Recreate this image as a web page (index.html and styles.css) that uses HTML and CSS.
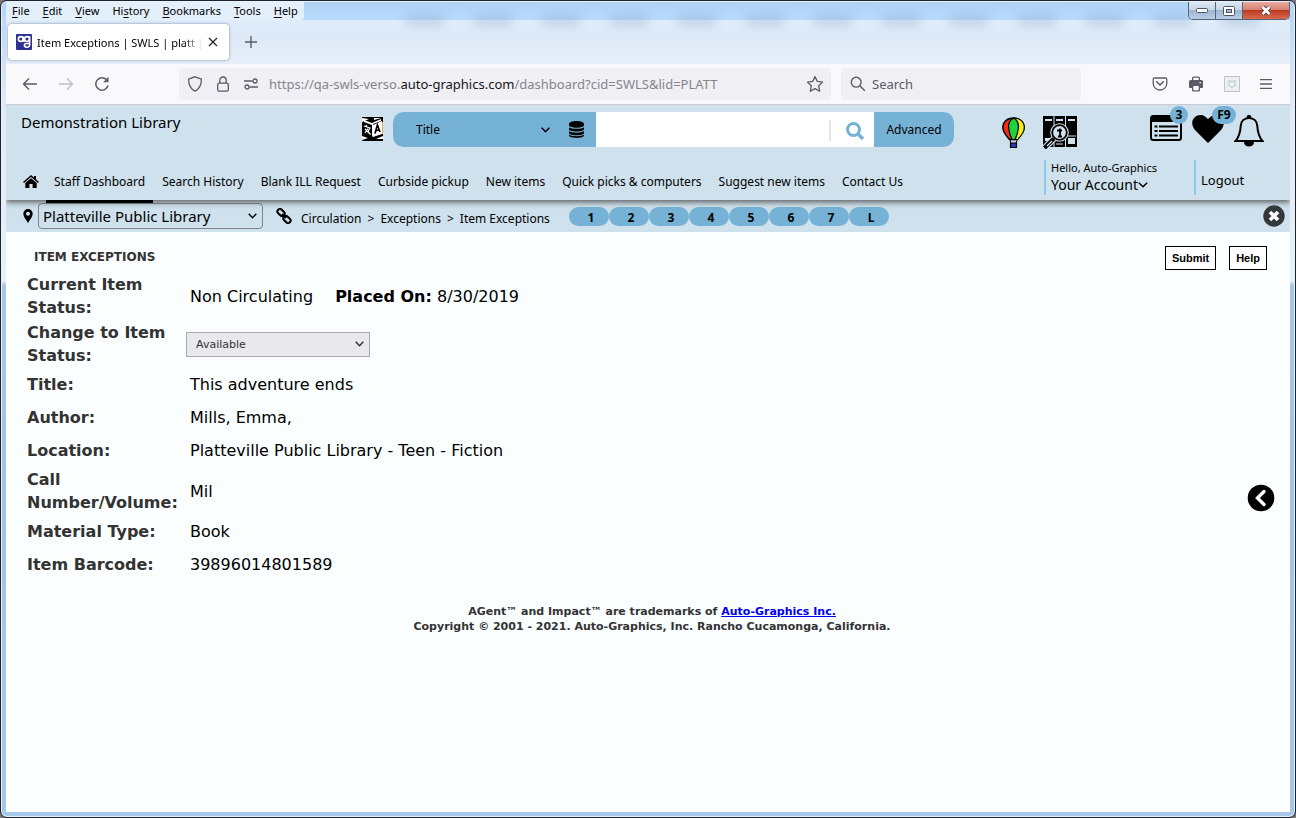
FILE: index.html
```html
<!DOCTYPE html>
<html lang="en">
<head>
<meta charset="utf-8">
<title>Item Exceptions | SWLS | platt</title>
<link rel="stylesheet" href="styles.css">
</head>
<body>
<div class="window">
  <div class="glass">
    <div class="ghost" aria-hidden="true"></div>
    <div class="titlebar">
      <nav class="menu" aria-label="Browser menu">
        <button><u>F</u>ile</button><button><u>E</u>dit</button><button><u>V</u>iew</button><button>Hi<u>s</u>tory</button><button><u>B</u>ookmarks</button><button><u>T</u>ools</button><button><u>H</u>elp</button>
      </nav>
      <div class="win-controls">
        <button class="wc" aria-label="Minimize"><svg width="12" height="6" viewBox="0 0 12 6"><rect x=".5" y=".5" width="11" height="4" rx="1" fill="#fff" stroke="#4b5468"/></svg></button>
        <button class="wc" aria-label="Maximize"><svg width="12" height="10" viewBox="0 0 12 10"><rect x=".5" y=".5" width="11" height="9" rx="1" fill="#fff" stroke="#4b5468"/><rect x="3.500" y="3.500" width="5" height="3" fill="#a9bdd4" stroke="#4b5468"/></svg></button>
        <button class="wc wc-close" aria-label="Close window"><svg width="12" height="11" viewBox="0 0 12 11"><path d="M2.500 2l7 7M9.500 2l-7 7" stroke="#4b4048" stroke-width="4.500"/><path d="M2.500 2l7 7M9.500 2l-7 7" stroke="#fff" stroke-width="2.600"/></svg></button>
      </div>
    </div>
    <div class="tabs">
      <div class="tab">
        <svg class="favicon" width="16" height="16" viewBox="0 0 16 16"><rect width="16" height="16" rx="1" fill="#2e3192"/><g fill="none" stroke="#fff" stroke-width="1.600"><circle cx="4.800" cy="5" r="2.400"/><path d="M7.200 2.500V6c0 1 .6 1.500 1.500 1.500"/><circle cx="11" cy="5" r="2.400"/><path d="M13.600 2v8.500a2.500 2.500 0 0 1-2.600 2.700c-1.600 0-2.600-.8-2.600-1.900s1-1.900 2.600-1.800h2.500"/></g></svg>
        <span class="tab-title">Item Exceptions | SWLS | platt | A</span>
        <button class="icon-btn tab-close" aria-label="Close tab"><svg width="10" height="10" viewBox="0 0 10 10"><path d="M1 1l8 8M9 1L1 9" stroke="#222" stroke-width="1.200"/></svg></button>
      </div>
      <button class="icon-btn new-tab" aria-label="New tab"><svg width="12" height="12" viewBox="0 0 12 12"><path d="M6 0v12M0 6h12" stroke="#5b5b66" stroke-width="1.400"/></svg></button>
    </div>
  </div>

  <div class="toolbar">
    <div class="nav-buttons">
      <button class="icon-btn" aria-label="Back"><svg width="16" height="14" viewBox="0 0 16 14"><path d="M15 7H1.500M7 1.500L1.500 7 7 12.500" fill="none" stroke="#5b5b66" stroke-width="1.400"/></svg></button>
      <button class="icon-btn" aria-label="Forward"><svg width="16" height="14" viewBox="0 0 16 14"><path d="M1 7h13.500M9 1.500L14.500 7 9 12.500" fill="none" stroke="#bebec6" stroke-width="1.400"/></svg></button>
      <button class="icon-btn" aria-label="Reload"><svg width="16" height="16" viewBox="0 0 16 16"><path d="M14 9.500A6.200 6.200 0 1 1 12.500 3.700" fill="none" stroke="#5b5b66" stroke-width="1.500"/><path d="M14.500.8v5.400H9.200z" fill="#5b5b66"/></svg></button>
    </div>
    <div class="url">
      <svg width="16" height="16" viewBox="0 0 16 16"><path d="M8 .8l6 2.100c.3.100.4.300.4.600-.1 5.200-1.400 9.300-6.400 11.600C3 12.800 1.700 8.700 1.600 3.500c0-.3.100-.5.400-.6z" fill="none" stroke="#5b5b66" stroke-width="1.300"/></svg>
      <svg width="12" height="16" viewBox="0 0 12 16"><rect x=".7" y="7.200" width="10.600" height="8" rx="1.600" fill="none" stroke="#5b5b66" stroke-width="1.300"/><path d="M2.800 7V4.200a3.200 3.200 0 0 1 6.400 0V7" fill="none" stroke="#5b5b66" stroke-width="1.300"/></svg>
      <svg width="16" height="12" viewBox="0 0 16 12"><g fill="none" stroke="#5b5b66" stroke-width="1.300"><path d="M1 3h8.500M6.500 9H15"/><circle cx="12" cy="3" r="2"/><circle cx="4" cy="9" r="2"/></g></svg>
      <span class="address">https://qa-swls-verso.<b>auto-graphics.com</b>/dashboard?cid=SWLS&amp;lid=PLATT</span>
      <button class="icon-btn" aria-label="Bookmark this page"><svg width="18" height="18" viewBox="0 0 18 18"><path d="M9 1.500l2.300 4.900 5.300.7-3.900 3.700 1 5.400L9 13.600l-4.700 2.600 1-5.400L1.400 7.100l5.300-.7z" fill="none" stroke="#5b5b66" stroke-width="1.300" stroke-linejoin="round"/></svg></button>
    </div>
    <label class="find"><svg width="16" height="16" viewBox="0 0 16 16"><circle cx="6.200" cy="6.200" r="4.900" fill="none" stroke="#5b5b66" stroke-width="1.400"/><path d="M9.800 9.800l5 5" stroke="#5b5b66" stroke-width="1.400"/></svg><input type="text" placeholder="Search" aria-label="Search the web"></label>
    <div class="tools">
      <button class="icon-btn" aria-label="Save to Pocket"><svg width="16" height="14" viewBox="0 0 16 14"><path d="M2.500 1h11c.8 0 1.300.5 1.300 1.300v4A6.600 6.600 0 0 1 8 13 6.600 6.600 0 0 1 1.200 6.300v-4C1.200 1.500 1.700 1 2.500 1z" fill="none" stroke="#5b5b66" stroke-width="1.300"/><path d="M4.700 4.800L8 8l3.300-3.200" fill="none" stroke="#5b5b66" stroke-width="1.500" stroke-linecap="round"/></svg></button>
      <button class="icon-btn" aria-label="Print"><svg width="16" height="16" viewBox="0 0 16 16"><path d="M4 4V2a1.500 1.500 0 0 1 1.500-1.500h5A1.500 1.500 0 0 1 12 2v2h1.500A1.500 1.500 0 0 1 15 5.500V11a1 1 0 0 1-1 1h-2v2.500a1 1 0 0 1-1 1H5a1 1 0 0 1-1-1V12H2a1 1 0 0 1-1-1V5.500A1.500 1.500 0 0 1 2.500 4z" fill="#5b5b66"/><path d="M5.300 1.800h5.400V4H5.300zM5.300 10h5.400v4.300H5.300zM11.500 6h1.500v1.200h-1.500z" fill="#f9f9fb"/></svg></button>
      <button class="icon-btn" aria-label="Extension"><svg width="16" height="16" viewBox="0 0 16 16"><rect x=".5" y=".5" width="15" height="15" fill="#eef0f0" stroke="#bcc6c6"/><path d="M5 4.500l3 1.200 3-1.200v5L8 11.500l-3-2z" fill="none" stroke="#c9d1d1" stroke-width="1.300"/></svg></button>
      <button class="icon-btn" aria-label="Open menu"><svg width="12" height="10" viewBox="0 0 12 10"><path d="M0 .7h12M0 5h12M0 9.300h12" stroke="#5b5b66" stroke-width="1.300"/></svg></button>
    </div>
  </div>

  <div class="page">
    <header class="site">
      <div class="site-top">
        <div class="library">Demonstration Library</div>
        <button class="icon-btn translate" aria-label="Translate"><svg width="21" height="24" viewBox="0 0 21 24"><rect width="21" height="24" fill="#000"/><path d="M2 3l8 3 9-4v2l-8 3v12l-1 1V8L2 5z" fill="#fff"/><path d="M11 8l9-4v13l-9 3z" fill="#fff"/><path d="M0 1l7 1-7 3zM12 1h7l-7 2zM0 19l6 2-6 2zM14 22l7-3v3z" fill="#fff"/><path d="M2 9l6 2-2 3.500 2.500 3M6 11.500L3 16M3 12l4 4M4 8l1 2" fill="none" stroke="#fff" stroke-width="1.200"/><path d="M13 16.500l2.400-8.500 2.600 7M13.800 13.700l3.500-1" fill="none" stroke="#000" stroke-width="1.700"/><path d="M20.500 5v12" stroke="#e8a24c"/></svg></button>
        <form class="search" onsubmit="return false">
          <span class="select search-by"><select aria-label="Search by"><option>Title</option></select><svg width="9" height="6" viewBox="0 0 9 6"><path d="M.7.7l3.800 4 3.800-4" fill="none" stroke="#000" stroke-width="1.500"/></svg></span>
          <button class="icon-btn databases" aria-label="Databases" type="button"><svg width="15" height="17" viewBox="0 0 15 17"><path d="M0 3c0-4 15-4 15 0v1.200C15 7.500 0 7.500 0 4.200z"/><path d="M0 6.200c2 2.200 13 2.200 15 0v2c0 3-15 3-15 0zM0 10c2 2.200 13 2.200 15 0v2c0 3-15 3-15 0zM0 13.600c2 2.200 13 2.200 15 0V14.500c0 3.200-15 3.200-15 0z"/></svg></button>
          <input type="text" aria-label="Search the catalog">
          <button class="icon-btn go" aria-label="Search"><svg width="18" height="18" viewBox="0 0 18 18"><circle cx="7.500" cy="7.500" r="6" fill="none" stroke="#76b2d5" stroke-width="3"/><path d="M11.500 11.500l5.500 5.500" stroke="#76b2d5" stroke-width="3.400"/></svg></button>
          <button class="advanced" type="button">Advanced</button>
        </form>
        <div class="left-icons">
          <button class="icon-btn" aria-label="Balloon"><svg width="23" height="32" viewBox="0 0 23 32"><path d="M7.500 21.500h8l-1.500 5h-5z" fill="#ccd" stroke="#000"/><path d="M11.500 1C5 1 .8 5 .8 10.500c0 5 4.200 9 6.700 12h8c2.500-3 6.700-7 6.700-12C22.200 5 18 1 11.500 1z" fill="#f22a1c" stroke="#000" stroke-width="1.400"/><path d="M11.500 1c6.500 0 10.700 4 10.700 9.500 0 5-4.200 9-6.700 12h-4z" fill="#f7e81c" stroke="#000"/><path d="M11.500 1c-3.600 2-5.400 6-4.800 10.500.5 4.500 1.800 8 3.300 11h3c1.500-3 2.800-6.500 3.300-11C16.900 7 15.100 3 11.500 1z" fill="#1fd13b" stroke="#000" stroke-width="1.200"/><path d="M8.500 26h6v4.500h-6z" fill="#2b3cb0" stroke="#000" stroke-width="1.200"/></svg></button>
          <button class="icon-btn" aria-label="Catalog lookup"><svg width="34" height="33" viewBox="0 0 34 33"><path d="M0 0h10.500v31H0zM11.500 0H22v31H11.500zM23 0h11v31H23z"/><path d="M2 3h7v2H2zM13 3h7v2h-7zM25 3h7v2h-7zM2 22h5v3H2zM25 22h7v6h-7z" fill="#cee1ec"/><path d="M24 20h9M13 28h7" stroke="#cee1ec"/><circle cx="16.500" cy="16.500" r="9.300" fill="#cee1ec"/><circle cx="16.500" cy="16.500" r="7.300" fill="#cee1ec" stroke="#000" stroke-width="1.800"/><path d="M11 22.500L1.500 32" stroke="#cee1ec" stroke-width="6.500"/><path d="M11 22.500l-9.500 9.500" stroke="#000" stroke-width="4"/><path d="M9 25l-5 5" stroke="#cee1ec" stroke-width="1.200"/><path d="M17 12.500V20M14 14.500h5M15 20.500h4" fill="none" stroke="#000" stroke-width="1.800"/></svg></button>
        </div>
        <div class="right-icons">
          <button class="icon-btn badged" aria-label="Requests"><svg width="32" height="26" viewBox="0 0 32 26"><rect x="1" y="1" width="30" height="24" rx="2.500" fill="#cee1ec" stroke="#000" stroke-width="2"/><path d="M1 1h30v6H1z"/><path d="M4.500 11.500h3M4.500 16h3M4.500 20.500h3M9 11.500h19M9 16h19M9 20.500h19" stroke="#000" stroke-width="2"/></svg><span class="badge">3</span></button>
          <button class="icon-btn badged" aria-label="Favorites"><svg width="32" height="28" viewBox="0 0 32 28"><path d="M16 28L3 15C-5 5 6-3.500 13 1.500L16 4l3-2.500C26-3.500 37 5 29 15z"/></svg><span class="badge badge-wide">F9</span></button>
          <button class="icon-btn" aria-label="Notifications"><svg width="30" height="32" viewBox="0 0 30 32"><path d="M15 3c5 0 8 3.500 8.300 8 .4 7 1.700 11 5.200 15H1.500C5 22 6.300 18 6.700 11 7 6.500 10 3 15 3z" fill="none" stroke="#000" stroke-width="2"/><path d="M15 0a2 2 0 0 1 2 3h-4a2 2 0 0 1 2-3zM10 27h10c0 2.800-2 4.500-5 4.500s-5-1.700-5-4.500z"/></svg></button>
        </div>
      </div>
      <div class="site-nav">
        <nav class="links" aria-label="Main">
          <a href="#" class="home" aria-label="Home"><svg width="16" height="13" viewBox="0 0 16 13"><path d="M8 0l3 2.600V1h2v3.300L16 7l-1 1-7-6-7 6L0 7z"/><path d="M2.300 8L8 3.200 13.700 8v5H9.600V9H6.400v4H2.300z"/></svg></a>
          <a href="#" class="current">Staff Dashboard</a><a href="#">Search History</a><a href="#">Blank ILL Request</a><a href="#">Curbside pickup</a><a href="#">New items</a><a href="#">Quick picks &amp; computers</a><a href="#">Suggest new items</a><a href="#">Contact Us</a>
        </nav>
        <div class="account"><span class="hello">Hello, Auto-Graphics</span><a href="#">Your Account<svg width="10" height="6" viewBox="0 0 10 6"><path d="M.8.8L5 4.800 9.200.8" fill="none" stroke="#000" stroke-width="1.500"/></svg></a></div>
        <div class="logout"><a href="#">Logout</a></div>
      </div>
    </header>

    <div class="subbar">
      <svg class="pin" width="10" height="14" viewBox="0 0 10 14"><path fill-rule="evenodd" d="M5 0a4.700 4.700 0 0 1 4.700 4.700C9.700 8 6.500 11 5 14 3.500 11 .3 8 .3 4.700A4.700 4.700 0 0 1 5 0zm0 2.700a2 2 0 1 0 0 4 2 2 0 0 0 0-4z"/></svg>
      <span class="select branch"><select aria-label="Library"><option>Platteville Public Library</option></select><svg width="9" height="6" viewBox="0 0 9 6"><path d="M.7.7l3.800 4 3.800-4" fill="none" stroke="#000" stroke-width="1.500"/></svg></span>
      <svg class="chain" width="16" height="16" viewBox="0 0 16 16"><g fill="none" stroke="#000" stroke-width="2"><rect x="1" y="2" width="8" height="5" rx="2.500" transform="rotate(45 5 4.500)"/><rect x="7" y="9" width="8" height="5" rx="2.500" transform="rotate(45 11 11.500)"/><path d="M6 6l4 4"/></g></svg>
      <nav class="crumbs" aria-label="Breadcrumb"><a href="#">Circulation</a><span>&gt;</span><a href="#">Exceptions</a><span>&gt;</span><a href="#">Item Exceptions</a></nav>
      <div class="pills"><button>1</button><button>2</button><button>3</button><button>4</button><button>5</button><button>6</button><button>7</button><button>L</button></div>
      <button class="icon-btn close-page" aria-label="Close"><svg width="22" height="22" viewBox="0 0 22 22"><circle cx="11" cy="11" r="10.700" fill="#33383c"/><path d="M7 7l8 8M15 7l-8 8" stroke="#fff" stroke-width="3.600"/></svg></button>
    </div>

    <main class="content">
      <div class="heading"><h1>ITEM EXCEPTIONS</h1><div class="actions"><button>Submit</button><button>Help</button></div></div>
      <table class="details">
        <tr><th scope="row">Current Item Status:</th><td>Non Circulating <span class="placed"><b>Placed On:</b> 8/30/2019</span></td></tr>
        <tr><th scope="row"><label for="status">Change to Item Status:</label></th><td class="control"><span class="select status"><select id="status"><option>Available</option></select><svg width="9" height="6" viewBox="0 0 9 6"><path d="M.7.7l3.800 4 3.800-4" fill="none" stroke="#333" stroke-width="1.500"/></svg></span></td></tr>
        <tr><th scope="row">Title:</th><td>This adventure ends</td></tr>
        <tr><th scope="row">Author:</th><td>Mills, Emma,</td></tr>
        <tr><th scope="row">Location:</th><td>Platteville Public Library - Teen - Fiction</td></tr>
        <tr><th scope="row">Call Number/Volume:</th><td>Mil</td></tr>
        <tr><th scope="row">Material Type:</th><td>Book</td></tr>
        <tr><th scope="row">Item Barcode:</th><td>39896014801589</td></tr>
      </table>
      <footer>AGent™ and Impact™ are trademarks of <a href="#">Auto-Graphics Inc.</a><br>Copyright © 2001 - 2021. Auto-Graphics, Inc. Rancho Cucamonga, California.</footer>
      <button class="icon-btn drawer" aria-label="Open side panel"><svg width="28" height="28" viewBox="0 0 28 28"><circle cx="14" cy="14" r="13.300"/><path d="M17 7.500L10.500 14l6.500 6.500" fill="none" stroke="#fff" stroke-width="3.400" stroke-linecap="round"/></svg></button>
    </main>
  </div>
</div>
</body>
</html>
```
FILE: styles.css
```css
* { box-sizing: border-box; }
body { margin: 0; background: #777; color: #000; font: 12px "Noto Sans", sans-serif; }
button, input, select { font: inherit; color: inherit; margin: 0; }
button { padding: 0; border: 0; background: none; white-space: nowrap; }
svg { display: block; flex: none; }
a { color: inherit; text-decoration: none; }

.window {
  display: flex; flex-direction: column; min-height: 100vh; padding: 0 5px 5px;
  border: 1px solid #1d2430; border-radius: 7px;
  box-shadow: inset 0 0 0 1px #e6f1fc;
  background: linear-gradient(#b4d4f6 0, #e1eaf6 100px, #e9eff9 280px, #a9c6e8 284px, #a4c2e4 500px, #a8c8ea 100%);
  overflow: hidden;
}
.glass { position: relative; margin: 1px 0 0; background: linear-gradient(#b0d2f4 0, #b8dafc 18px, #dfedfb 18px, #dde9f6 36px, #e6eff9 62px); }
.ghost { position: absolute; left: 400px; right: 0; top: 12px; height: 12px; filter: blur(5px); background: repeating-linear-gradient(90deg, #8aa6c455 0 38px, transparent 38px 68px); }
.titlebar { position: relative; display: flex; align-items: flex-start; justify-content: space-between; height: 18px; }
.menu { display: flex; gap: 13px; padding: 0 6px; height: 18px; border-radius: 0 0 4px 0; background: #e3effb; font-size: 11px; line-height: 18px; }
.menu u { text-underline-offset: 2px; }
.win-controls { display: flex; height: 18px; border: 1px solid #56647a; border-top: 0; border-radius: 0 0 5px 5px; overflow: hidden; }
.wc { display: grid; place-items: center; width: 27px; border-right: 1px solid #56647a; background: linear-gradient(#dce8f5, #c5d5e7 48%, #9fb6d0 50%, #b9cee4); }
.wc-close { width: 46px; border: 0; background: linear-gradient(#e9a99d, #d9806f 48%, #c03a22 50%, #d86a50); }
.tabs { position: relative; display: flex; align-items: center; gap: 16px; height: 44px; padding: 0 2px; }
.tab { display: flex; align-items: center; gap: 5px; width: 221px; height: 36px; padding: 0 11px 0 8px; border-radius: 4px; background: #fff; box-shadow: 0 0 3px #7a8aa0; }
.tab-title { flex: 1; overflow: hidden; white-space: nowrap; font-size: 11px; -webkit-mask-image: linear-gradient(90deg, #000 88%, transparent); mask-image: linear-gradient(90deg, #000 88%, transparent); }

.toolbar { display: flex; align-items: center; height: 41px; padding: 0 18px 0 16px; border-bottom: 1px solid #cbcbcf; background: #f9f9fb; font-size: 13px; }
.nav-buttons { display: flex; gap: 20px; width: 157px; }
.url { display: flex; align-items: center; gap: 14px; flex: 0 1 652px; min-width: 0; height: 32px; padding: 0 7px 0 8px; border-radius: 4px; background: #f0eff4; color: #85858d; }
.address { flex: 1; min-width: 0; overflow: hidden; white-space: nowrap; margin-left: -4px; }
.address b { color: #15141a; font-weight: 400; }
.find { display: flex; align-items: center; gap: 6px; flex: 0 1 240px; height: 32px; margin-left: 10px; padding: 0 9px; border-radius: 4px; background: #f0eff4; }
.find input { flex: 1; min-width: 0; border: 0; padding: 0; background: none; }
.find input::placeholder { color: #5b5b66; opacity: 1; }
.tools { display: flex; align-items: center; gap: 20px; margin-left: auto; }

.page { display: flex; flex: 1; flex-direction: column; background: #fafeff; }
.site { position: relative; padding: 0 15px; background: #cee1ec; box-shadow: 0 2px 6px #555; clip-path: inset(0 0 -10px 0); }
.site-top { display: flex; align-items: flex-start; height: 53px; padding-top: 7px; }
.library { width: 341px; font-size: 15px; line-height: 20px; }
.translate { margin: 5px 10px 0 0; }
.search { display: flex; flex: 0 1 561px; height: 35px; border-radius: 10px; overflow: hidden; background: #fff; }
.select { display: grid; align-items: center; }
.select > * { grid-area: 1 / 1; }
.select select { appearance: none; width: 100%; height: 100%; border: 0; background: none; border-radius: 0; }
.select svg { justify-self: end; pointer-events: none; }
.search-by { width: 168px; background: #76b2d5; }
.search-by select { padding: 0 24px 0 23px; }
.search-by svg { margin-right: 11px; }
.databases { width: 35px; padding-left: 8px; background: #76b2d5; }
.search input { flex: 1; min-width: 0; border: 0; background: #fff; }
.go { width: 45px; height: 21px; margin-top: 8px; padding-left: 15px; border-left: 2px solid #e4e4e6; }
.advanced { width: 80px; background: #76b2d5; }
.left-icons { display: flex; gap: 18px; margin: 4px 0 0 48px; }
.right-icons { display: flex; gap: 10px; margin: 3px 11px 0 auto; }
.right-icons .icon-btn { align-self: flex-start; }
.badged { position: relative; }
.badge { position: absolute; top: -9px; right: -6px; min-width: 18px; height: 18px; border-radius: 9px; background: #76b2d5; font-weight: 700; font-size: 12px; line-height: 18px; text-align: center; }
.badge-wide { right: -12px; min-width: 24px; }
.site-nav { display: flex; align-items: flex-start; height: 42px; white-space: nowrap; }
.links { display: flex; gap: 1px; flex: 1; min-width: 0; }
.links a { height: 45px; padding: 0 8px; line-height: 48px; }
.links .home { padding: 17px 6px 0 2px; }
.links .current { border-bottom: 3px solid #000; }
.account { width: 150px; height: 35px; margin-top: 2px; padding-left: 5px; border-left: 2px solid #8ccbf0; }
.account .hello { display: block; font-size: 11px; line-height: 16px; }
.account a { display: flex; align-items: center; font-size: 14px; line-height: 18px; }
.logout { width: 81px; height: 35px; margin-top: 2px; padding-left: 5px; border-left: 2px solid #8ccbf0; font-size: 13px; line-height: 40px; }

.subbar { display: flex; align-items: center; height: 32px; padding: 0 5px 0 17px; background: #cee1ec; white-space: nowrap; }
.pin { margin-right: 5px; }
.branch { width: 225px; height: 26px; border: 1px solid #7f8488; border-radius: 4px; font-size: 15px; }
.branch select { padding: 0 20px 0 4px; }
.branch svg { margin-right: 5px; }
.chain { margin: 0 9px 0 13px; }
.crumbs { display: flex; gap: 6px; width: 268px; padding-top: 4px; }
.pills { display: flex; }
.pills button { width: 40px; height: 19px; padding-left: 4px; border-radius: 10px; background: #76b2d5; font-weight: 700; line-height: 21px; }
.close-page { margin-left: auto; }

.content { position: relative; flex: 1; padding: 12px 23px 20px 21px; font-family: "DejaVu Sans", sans-serif; }
.heading { display: flex; justify-content: space-between; height: 28px; padding-left: 7px; }
h1 { margin: 0; color: #333; font-size: 12px; line-height: 27px; }
.actions { display: flex; gap: 13px; padding-top: 2px; }
.actions button { height: 24px; padding: 0 6px; border: 1px solid #000; background: #fff; font: bold 11px "Liberation Sans", sans-serif; }
.details { border-collapse: collapse; font-size: 16px; line-height: 23px; }
.details tr { height: 33px; }
.details th { width: 159px; padding: 1px 0; color: #333; text-align: left; }
.details td { padding: 1px 0 1px 4px; }
.details .control { padding-left: 0; }
.placed { margin-left: 17px; }
.status { width: 184px; height: 25px; border: 1px solid #a9a9ad; background: #e9e8ed; color: #333; font-size: 11px; }
.status select { padding: 0 20px 0 9px; }
.status svg { margin-right: 5px; }
footer { margin-top: 23px; padding-left: 10px; color: #333; font-weight: 700; font-size: 11px; line-height: 15px; text-align: center; }
footer a { color: #00e; text-decoration: underline; }
.drawer { position: absolute; right: 15px; top: 252px; }
```
